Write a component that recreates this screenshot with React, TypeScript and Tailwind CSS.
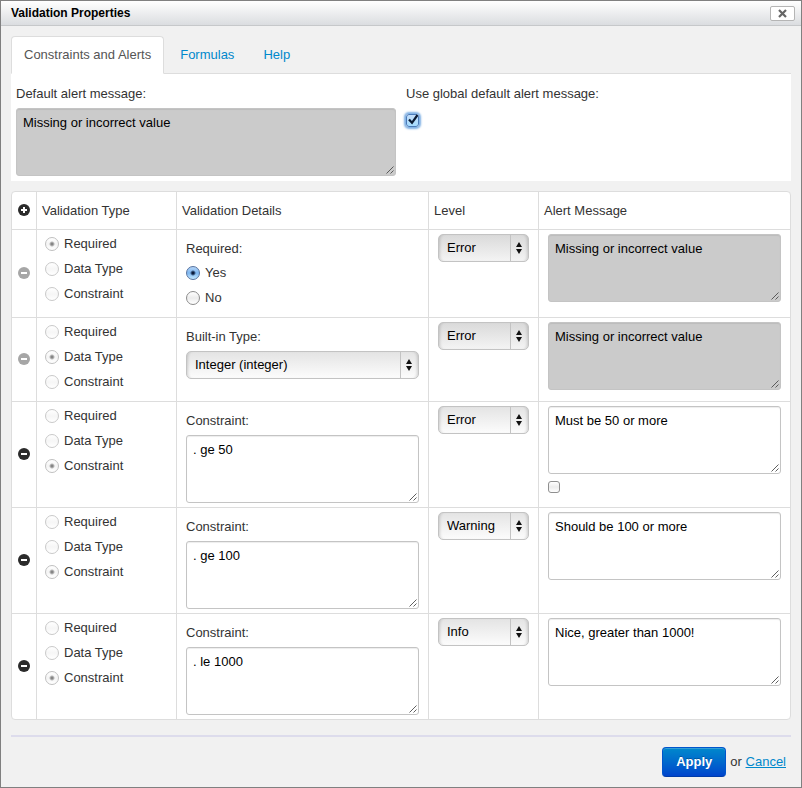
import { useId, useState } from "react";
import type { ReactNode } from "react";

type Kind = "Required" | "Data Type" | "Constraint";
type Level = "Error" | "Warning" | "Info";

interface Rule {
  kind: Kind;
  level: Level;
  detail: string;
  message: string;
  global: boolean;
  locked: boolean;
  offerGlobal: boolean;
}

const KINDS: Kind[] = ["Required", "Data Type", "Constraint"];
const DEFAULT_MESSAGE = "Missing or incorrect value";

const RULES: Rule[] = [
  { kind: "Required", level: "Error", detail: "Yes", message: DEFAULT_MESSAGE, global: true, locked: true, offerGlobal: false },
  { kind: "Data Type", level: "Error", detail: "Integer (integer)", message: DEFAULT_MESSAGE, global: true, locked: true, offerGlobal: false },
  { kind: "Constraint", level: "Error", detail: ". ge 50", message: "Must be 50 or more", global: false, locked: false, offerGlobal: true },
  { kind: "Constraint", level: "Warning", detail: ". ge 100", message: "Should be 100 or more", global: false, locked: false, offerGlobal: false },
  { kind: "Constraint", level: "Info", detail: ". le 1000", message: "Nice, greater than 1000!", global: false, locked: false, offerGlobal: false },
];

function CircleIcon({ plus = false, faded = false }: { plus?: boolean; faded?: boolean }) {
  return (
    <svg viewBox="0 0 12 12" className="block size-3" aria-hidden="true">
      <circle cx="6" cy="6" r="6" fill={faded ? "#a6a6a6" : "#2b2b2b"} />
      <rect x="3" y="5" width="6" height="2" fill="#fff" />
      {plus && <rect x="5" y="3" width="2" height="6" fill="#fff" />}
    </svg>
  );
}

function TextBox({ id, label, value, shaded = false }: { id?: string; label?: string; value: string; shaded?: boolean }) {
  return (
    <div className="relative">
      <textarea
        id={id}
        aria-label={label}
        defaultValue={value}
        readOnly={shaded}
        className={
          "block h-[68px] w-full resize-none rounded-[3px] border px-1.5 py-1 text-black shadow-[inset_0_1px_1px_rgba(0,0,0,0.075)] outline-none " +
          (shaded ? "border-[#c4c4c4] bg-[#cbcbcb]" : "border-[#c4c4c4] bg-white")
        }
      />
      <svg viewBox="0 0 8 8" className="pointer-events-none absolute right-0.5 bottom-0.5 size-2" aria-hidden="true">
        <path d="M0.5 7.5L7.5 0.5M4.5 7.5L7.5 4.5" stroke="#4d4d4d" strokeWidth="0.9" fill="none" />
      </svg>
    </div>
  );
}

function DropDown({ id, label, value, options, dark = false }: { id?: string; label?: string; value: string; options: string[]; dark?: boolean }) {
  return (
    <div className="relative">
      <select
        id={id}
        aria-label={label}
        defaultValue={value}
        className={
          "block h-7 w-full appearance-none rounded-[5px] border border-[#c3c3c3] bg-linear-to-b pr-5 pl-2 text-black shadow-[inset_3px_0_3px_-2px_rgba(0,0,0,0.16),inset_-3px_0_3px_-2px_rgba(0,0,0,0.16)] outline-none " +
          (dark ? "from-[#dadada] to-[#f4f4f4]" : "from-[#e4e4e4] to-[#fcfcfc]")
        }
      >
        {options.map((o) => (
          <option key={o}>{o}</option>
        ))}
      </select>
      <span className="pointer-events-none absolute inset-y-px right-px flex w-[18px] items-center justify-center border-l border-[#c3c3c3] pr-px">
        <svg viewBox="0 0 6 12" className="h-3 w-1.5" aria-hidden="true">
          <path d="M3 0L6 5H0ZM3 12L0 7H6Z" fill="#111" />
        </svg>
      </span>
    </div>
  );
}

function RadioGroup({ legend, options, value, disabled = false }: { legend: string; options: string[]; value: string; disabled?: boolean }) {
  const name = useId();
  return (
    <div role="radiogroup" aria-label={legend}>
      {options.map((o) => (
        <label key={o} className="flex h-[25px] items-center gap-[5px]">
          <input
            type="radio"
            name={name}
            defaultChecked={o === value}
            disabled={disabled}
            className="size-3.5 shrink-0 appearance-none rounded-full border border-[#8c8c8c] bg-linear-to-b from-white via-[#ececec] to-white checked:border-[#56729f] checked:bg-[radial-gradient(circle_at_center,#0a1a3a_0,#0a1a3a_1px,transparent_3px),linear-gradient(#b4d4f7,#7db6f0_50%,#c5e9ff)] disabled:border-[#c9c9c9] disabled:from-white disabled:via-[#f6f6f6] disabled:to-white disabled:checked:border-[#c0c0c0] disabled:checked:bg-[radial-gradient(circle_at_center,#858585_0,#858585_1px,transparent_3px),linear-gradient(#fff,#f4f4f4,#fff)]"
          />
          <span className="leading-5">{o}</span>
        </label>
      ))}
    </div>
  );
}

function Cell({ className, children }: { className: string; children: ReactNode }) {
  return <td className={"border-t border-[#dddddd] " + className}>{children}</td>;
}

function Details({ rule }: { rule: Rule }) {
  const id = useId();
  if (rule.kind === "Required") {
    return (
      <>
        <div className="mb-px leading-5">Required:</div>
        <RadioGroup legend="Required" options={["Yes", "No"]} value={rule.detail} />
      </>
    );
  }
  return (
    <>
      <label htmlFor={id} className="mb-1 block leading-5">
        {rule.kind === "Data Type" ? "Built-in Type:" : "Constraint:"}
      </label>
      {rule.kind === "Data Type" ? (
        <DropDown id={id} value={rule.detail} options={["Integer (integer)", "Decimal (decimal)", "Date (date)"]} />
      ) : (
        <TextBox id={id} value={rule.detail} />
      )}
    </>
  );
}

function RuleRow({ rule }: { rule: Rule }) {
  return (
    <tr className={rule.kind === "Required" ? "h-[88px]" : ""}>
      <Cell className="pb-0.5 align-middle">
        <button type="button" aria-label="Remove validation" disabled={rule.locked} className="mx-auto block">
          <CircleIcon faded={rule.locked} />
        </button>
      </Cell>
      <Cell className="border-l pt-px pb-[7px] pl-2 align-top">
        <RadioGroup legend="Validation type" options={KINDS} value={rule.kind} disabled />
      </Cell>
      <Cell className="border-l px-[9px] pt-[9px] pb-1 align-top">
        <Details rule={rule} />
      </Cell>
      <Cell className="border-l px-[9px] pt-1 align-top">
        <DropDown label="Level" value={rule.level} options={["Error", "Warning", "Info"]} dark={rule.locked} />
      </Cell>
      <Cell className="border-l px-[9px] pt-1 align-top">
        <TextBox label="Alert message" value={rule.message} shaded={rule.global} />
        {rule.offerGlobal && (
          <input
            type="checkbox"
            aria-label="Use default alert message"
            className="mt-[7px] block size-3 appearance-none rounded-[3px] border border-[#8f8f8f] bg-linear-to-b from-white via-[#ececec] to-white"
          />
        )}
      </Cell>
    </tr>
  );
}

function Tabs() {
  return (
    <nav className="flex gap-[3px] border-b border-[#dddddd] leading-5">
      <a href="#constraints" aria-current="page" className="-mb-px rounded-t border border-[#dddddd] border-b-white bg-white px-3 py-2 text-[#555555]">
        Constraints and Alerts
      </a>
      <a href="#formulas" className="-mb-px border border-transparent px-3 py-2 text-[#0088cc]">
        Formulas
      </a>
      <a href="#help" className="-mb-px border border-transparent px-3 py-2 text-[#0088cc]">
        Help
      </a>
    </nav>
  );
}

export default function App() {
  const [useGlobal, setUseGlobal] = useState(true);
  return (
    <div className="flex min-h-screen flex-col border border-[#808080] bg-[#f1f1f1] font-['Liberation_Sans',Arial,sans-serif] text-[13px] leading-5 text-[#333333]">
      <header className="flex h-[25px] items-center justify-between border-b border-[#c6c8ca] bg-linear-to-b from-white to-[#dbdde0] pr-1.5 pl-2.5">
        <h1 className="text-[12px] font-bold text-black">Validation Properties</h1>
        <button type="button" aria-label="Close" className="flex h-[15px] w-[25px] items-center justify-center rounded-[2px] border border-[#b5b5b5] bg-white">
          <svg viewBox="0 0 9 9" className="size-[9px]" aria-hidden="true">
            <path d="M1 1L8 8M8 1L1 8" stroke="#666" strokeWidth="2.2" fill="none" />
          </svg>
        </button>
      </header>

      <main className="px-2.5 pt-2.5">
        <Tabs />

        <section className="grid grid-cols-2 gap-2.5 bg-white px-[5px] pt-2.5 pb-[5px]">
          <div>
            <label htmlFor="default-message" className="mb-1 block">
              Default alert message:
            </label>
            <TextBox id="default-message" value={DEFAULT_MESSAGE} shaded />
          </div>
          <div>
            <label htmlFor="use-global" className="mb-2.5 block">
              Use global default alert message:
            </label>
            <span className="relative block size-[13px]">
              <input
                id="use-global"
                type="checkbox"
                checked={useGlobal}
                onChange={(e) => setUseGlobal(e.target.checked)}
                className="block size-[13px] appearance-none rounded-[3px] border border-[#4a7ab8] bg-linear-to-b from-[#c4defa] to-[#a5dcff] shadow-[0_0_2px_2px_#7fb0e4]"
              />
              {useGlobal && (
                <svg viewBox="0 0 16 16" className="pointer-events-none absolute -top-0.5 left-0 size-4" aria-hidden="true">
                  <path d="M3 7.5L6 10.8L11.5 3" stroke="#0b1a33" strokeWidth="2.2" fill="none" />
                </svg>
              )}
            </span>
          </div>
        </section>

        <table className="mt-2.5 w-full table-fixed border-separate border-spacing-0 rounded border border-[#dddddd] bg-white">
          <colgroup>
            <col className="w-6" />
            <col className="w-[140px]" />
            <col />
            <col className="w-[110px]" />
            <col />
          </colgroup>
          <thead>
            <tr className="h-[37px] text-left">
              <th className="pb-0.5 font-normal">
                <button type="button" aria-label="Add validation" className="mx-auto block">
                  <CircleIcon plus />
                </button>
              </th>
              <th className="border-l border-[#dddddd] px-[5px] font-normal">Validation Type</th>
              <th className="border-l border-[#dddddd] px-[5px] font-normal">Validation Details</th>
              <th className="border-l border-[#dddddd] px-[5px] font-normal">Level</th>
              <th className="border-l border-[#dddddd] px-[5px] font-normal">Alert Message</th>
            </tr>
          </thead>
          <tbody>
            {RULES.map((rule, i) => (
              <RuleRow key={i} rule={rule} />
            ))}
          </tbody>
        </table>
      </main>

      <footer className="mx-2.5 mt-[15px] flex items-center justify-end gap-1 border-t-2 border-[#dddcec] py-2.5 pr-[5px]">
        <button
          type="button"
          className="h-[30px] rounded border border-[#0055cc] border-b-[#003ba8] bg-linear-to-b from-[#0088cc] to-[#0044cc] px-[13px] font-bold text-white shadow-[inset_0_1px_0_rgba(255,255,255,0.2)] [text-shadow:0_-1px_0_rgba(0,0,0,0.25)]"
        >
          Apply
        </button>
        <span>
          or{" "}
          <a href="#cancel" className="text-[#0088cc] underline">
            Cancel
          </a>
        </span>
      </footer>
    </div>
  );
}
